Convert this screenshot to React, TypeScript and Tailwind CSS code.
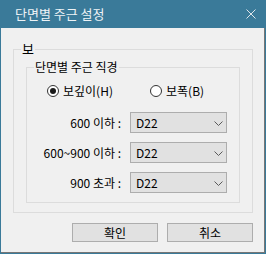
import React from "react";

function Radio({ checked, label }: { checked: boolean; label: string }) {
  return (
    <div className="flex items-center gap-[4px]">
      <span className="flex h-[12px] w-[12px] items-center justify-center rounded-full border border-[#333333] bg-white">
        {checked && <span className="h-[6px] w-[6px] rounded-full bg-[#1a1a1a]" />}
      </span>
      <span className="leading-[14px]">{label}</span>
    </div>
  );
}

function Select({ value }: { value: string }) {
  return (
    <div className="ml-[9px] flex h-[21px] w-[97px] items-center justify-between border border-[#adadad] bg-[#e1e1e1] pl-[5px] pr-[3px]">
      <span className="leading-[14px]">{value}</span>
      <svg width="9" height="5" viewBox="0 0 9 5" className="mt-[1px]">
        <polyline points="0.5,0.5 4.5,4.5 8.5,0.5" fill="none" stroke="#5a5a5a" strokeWidth="1" />
      </svg>
    </div>
  );
}

function Row({ label, value }: { label: string; value: string }) {
  return (
    <div className="flex h-[21px] items-center">
      <span className="w-[94px] text-right leading-[14px]">{label}</span>
      <Select value={value} />
    </div>
  );
}

export default function App() {
  return (
    <div className="flex h-[254px] w-[266px] flex-col bg-[#3a7a99] px-px pb-px font-['Noto_Sans_CJK_KR','Noto_Sans',sans-serif] text-[12px] text-black">
      <div className="flex h-[28px] shrink-0 items-center justify-between pl-[14px] pr-[9px]">
        <span className="text-[13px] leading-[16px] text-[#eef3f6]">단면별 주근 설정</span>
        <svg width="10" height="10" viewBox="0 0 10 10">
          <line x1="0.5" y1="0.5" x2="9.5" y2="9.5" stroke="#dde5ea" strokeWidth="1" />
          <line x1="9.5" y1="0.5" x2="0.5" y2="9.5" stroke="#dde5ea" strokeWidth="1" />
        </svg>
      </div>
      <div className="flex flex-1 flex-col border-b border-r border-[#767676] bg-[#f0f0f0]">
        <div className="relative ml-[12px] mt-[21px] h-[164px] w-[240px] border border-[#dcdcdc] pl-[12px] pt-[17px]">
          <span className="absolute left-[7px] top-[-9px] bg-[#f0f0f0] px-[1px] text-[13px] leading-[16px]">보</span>
          <div className="relative flex h-[136px] w-[214px] flex-col border border-[#dcdcdc] pt-[13px]">
            <span className="absolute left-[7px] top-[-9px] bg-[#f0f0f0] px-[1px] leading-[16px]">단면별 주근 직경</span>
            <div className="flex h-[20px] items-center pl-[20px]">
              <div className="w-[103px]">
                <Radio checked label="보깊이(H)" />
              </div>
              <Radio checked={false} label="보폭(B)" />
            </div>
            <div className="mt-[11px] flex flex-col gap-[9px]">
              <Row label="600 이하 :" value="D22" />
              <Row label="600~900 이하 :" value="D22" />
              <Row label="900 초과 :" value="D22" />
            </div>
          </div>
        </div>
        <div className="ml-[12px] mt-[10px] flex w-[240px] justify-end gap-[9px]">
          <button className="flex h-[19px] w-[86px] items-center justify-center border border-[#adadad] bg-[#e1e1e1] leading-[14px]">
            확인
          </button>
          <button className="flex h-[19px] w-[86px] items-center justify-center border border-[#adadad] bg-[#e1e1e1] leading-[14px]">
            취소
          </button>
        </div>
      </div>
    </div>
  );
}
